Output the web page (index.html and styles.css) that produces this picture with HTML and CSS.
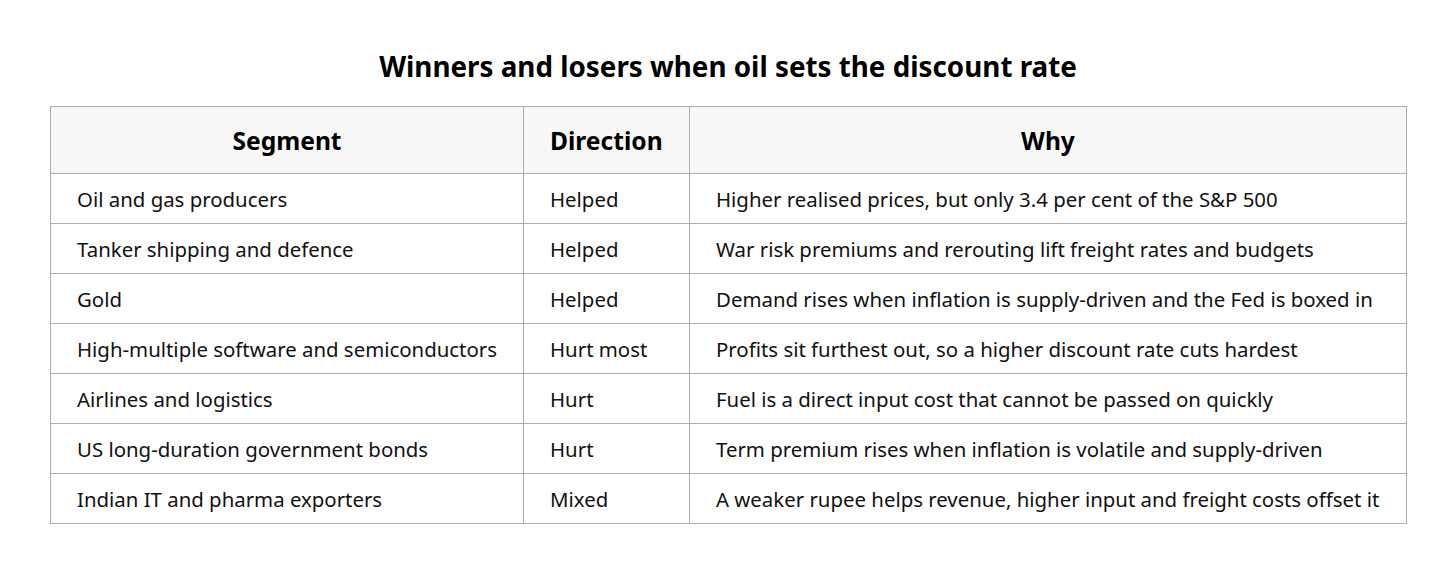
FILE: index.html
```html
<!DOCTYPE html>
<html>
<head>
<meta charset="utf-8">
<link rel="stylesheet" href="styles.css">
</head>
<body>
<div class="wrap">
  <h2 class="title">Winners and losers when oil sets the discount rate</h2>
  <table class="tbl">
    <colgroup>
      <col class="c1"><col class="c2"><col class="c3">
    </colgroup>
    <thead>
      <tr><th>Segment</th><th class="left">Direction</th><th>Why</th></tr>
    </thead>
    <tbody>
      <tr><td>Oil and gas producers</td><td>Helped</td><td>Higher realised prices, but only 3.4 per cent of the S&amp;P 500</td></tr>
      <tr><td>Tanker shipping and defence</td><td>Helped</td><td>War risk premiums and rerouting lift freight rates and budgets</td></tr>
      <tr><td>Gold</td><td>Helped</td><td>Demand rises when inflation is supply-driven and the Fed is boxed in</td></tr>
      <tr><td>High-multiple software and semiconductors</td><td>Hurt most</td><td>Profits sit furthest out, so a higher discount rate cuts hardest</td></tr>
      <tr><td>Airlines and logistics</td><td>Hurt</td><td>Fuel is a direct input cost that cannot be passed on quickly</td></tr>
      <tr><td>US long-duration government bonds</td><td>Hurt</td><td>Term premium rises when inflation is volatile and supply-driven</td></tr>
      <tr><td>Indian IT and pharma exporters</td><td>Mixed</td><td>A weaker rupee helps revenue, higher input and freight costs offset it</td></tr>
    </tbody>
  </table>
</div>
</body>
</html>
```
FILE: styles.css
```css
html, body {
  margin: 0;
  padding: 0;
  background: #ffffff;
}
body {
  font-family: "Noto Sans", "Open Sans", sans-serif;
  color: #111111;
}
.wrap {
  padding: 48px 50px 0 50px;
}
.title {
  margin: 0 0 22px 0;
  text-align: center;
  font-size: 27.8px;
  line-height: 36px;
  font-weight: 700;
  color: #000000;
}
.tbl {
  width: 1356px;
  border-collapse: collapse;
  table-layout: fixed;
  border: 1px solid #adadad;
}
.c1 { width: 473px; }
.c2 { width: 166px; }
.c3 { width: 717px; }
.tbl th {
  background: #f7f7f7;
  font-size: 24.6px;
  line-height: 60px;
  font-weight: 700;
  color: #000000;
  text-align: center;
  border: 1px solid #adadad;
  padding: 4px 26px 2px 26px;
}
.tbl th.left {
  text-align: left;
}
.tbl td {
  font-size: 20.4px;
  line-height: 48px;
  padding: 1px 26px 0 26px;
  border: 1px solid #adadad;
  white-space: nowrap;
  vertical-align: middle;
}
```
